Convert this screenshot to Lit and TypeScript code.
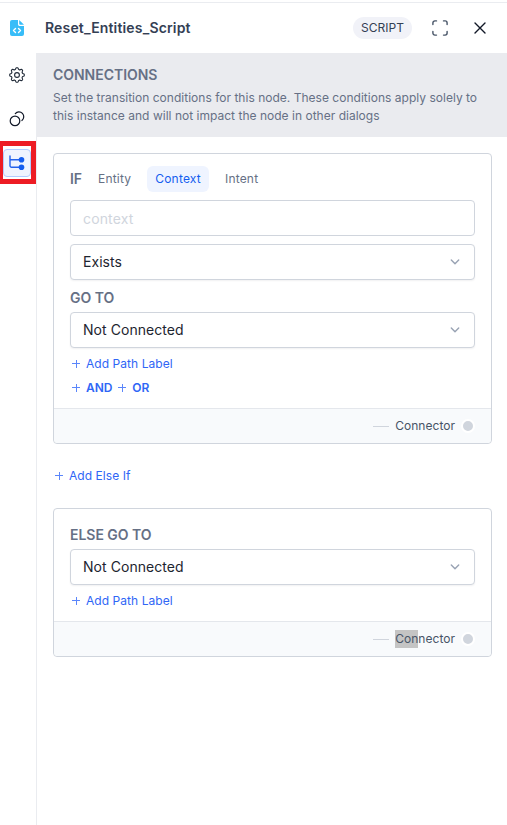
import { LitElement, html, css, nothing } from "lit";
import { customElement, property } from "lit/decorators.js";

const gearPath = (() => {
  const points: string[] = [];
  const steps = 96;
  for (let i = 0; i < steps; i++) {
    const a = (i / steps) * Math.PI * 2;
    const r = 6.5 + 0.85 * Math.tanh(1.8 * Math.cos(a * 8));
    points.push(`${(8 + r * Math.sin(a)).toFixed(2)} ${(8 - r * Math.cos(a)).toFixed(2)}`);
  }
  return `M${points.join("L")}Z`;
})();

const icons = {
  file: html`<svg width="14" height="16" viewBox="0 0 14 16">
    <path fill="#38bdf8" d="M2 0h6v4.200C8 5.300 8.700 6 9.800 6H14v8a2 2 0 0 1-2 2H2a2 2 0 0 1-2-2V2a2 2 0 0 1 2-2Z"/>
    <path fill="#38bdf8" d="M9.200 0 14 4.800H10.200a1 1 0 0 1-1-1Z"/>
    <path fill="none" stroke="#fff" stroke-width="1.400" stroke-linecap="round" stroke-linejoin="round" d="M5.500 8.500 3.500 10.500l2 2M8.500 8.500l2 2-2 2"/>
  </svg>`,
  expand: html`<svg width="16" height="16" viewBox="0 0 16 16" fill="none" stroke="#475467" stroke-width="1.400" stroke-linecap="round" stroke-linejoin="round">
    <path d="M.9 4.500V2.900a2 2 0 0 1 2-2h1.600M11.500.9h1.600a2 2 0 0 1 2 2v1.600M15.100 11.500v1.600a2 2 0 0 1-2 2h-1.600M4.500 15.100H2.900a2 2 0 0 1-2-2v-1.600"/>
  </svg>`,
  close: html`<svg width="12" height="12" viewBox="0 0 12 12" fill="none" stroke="#111827" stroke-width="1.400" stroke-linecap="round">
    <path d="M1 1l10 10M11 1 1 11"/>
  </svg>`,
  gear: html`<svg width="16" height="16" viewBox="0 0 16 16" fill="none" stroke="#1f2937" stroke-width="1.100" stroke-linejoin="round">
    <path d=${gearPath}/><circle cx="8" cy="8" r="2.400"/>
  </svg>`,
  rings: html`<svg width="16" height="16" viewBox="0 0 16 16" fill="none" stroke="#111827" stroke-width="1.200">
    <circle cx="6" cy="9.900" r="4.800"/><path stroke-linecap="round" d="M6.300 2.600a4.800 4.800 0 1 1 6.600 6.900"/>
  </svg>`,
  tree: html`<svg width="16" height="16" viewBox="0 0 16 16">
    <path fill="none" stroke="#2563eb" stroke-width="1.400" stroke-linecap="round" d="M1 1v9.800a1.500 1.500 0 0 0 1.500 1.500H12M1 4.700h11"/>
    <circle cx="12.500" cy="4.700" r="2.800" fill="#155eef"/><circle cx="12.500" cy="12.300" r="2.800" fill="#155eef"/>
  </svg>`,
  chevron: html`<svg width="10" height="6" viewBox="0 0 10 6" fill="none" stroke="#98a2b3" stroke-width="1.400" stroke-linecap="round" stroke-linejoin="round">
    <path d="m1.300 1.100 3.700 3.700 3.700-3.700"/>
  </svg>`,
  plus: html`<svg width="8" height="8" viewBox="0 0 8 8" stroke="#5b86fb" stroke-width="1">
    <path d="M0 3.500h8M4.500 0v8"/>
  </svg>`,
};

@customElement("add-link")
class AddLink extends LitElement {
  @property() label = "";
  @property({ type: Boolean }) strong = false;
  static styles = css`
    :host { display: flex; align-items: center; height: 16px; gap: 6px; color: #2f66f6; font-size: 12px; line-height: 16px; white-space: nowrap; }
    svg { display: block; }
    .label { letter-spacing: 0.06px; }
    .strong { font-weight: 600; letter-spacing: -0.05px; }
  `;
  render() {
    return html`${icons.plus}<span class="label ${this.strong ? "strong" : ""}">${this.label}</span>`;
  }
}

@customElement("select-field")
class SelectField extends LitElement {
  @property() value = "";
  static styles = css`
    :host { display: flex; box-sizing: border-box; height: 36px; padding: 0 14px 0 12px; align-items: center; justify-content: space-between; border: 1px solid #d0d5dd; border-radius: 4px; background: #fff; color: #1d2530; font-size: 14px; letter-spacing: 0.05px; box-shadow: 0 1px 2px rgba(16, 24, 40, 0.06); }
    span { padding-bottom: 2px; }
    svg { display: block; }
  `;
  render() {
    return html`<span>${this.value}</span>${icons.chevron}`;
  }
}

@customElement("connector-bar")
class ConnectorBar extends LitElement {
  @property({ type: Number }) marked = 0;
  static styles = css`
    :host { display: flex; box-sizing: border-box; height: 35px; padding-right: 16px; align-items: center; justify-content: flex-end; border-top: 1px solid #e4e7ec; background: #f8fafc; border-radius: 0 0 4px 4px; color: #475467; font-size: 12px; letter-spacing: 0.03px; }
    .dash { width: 16px; height: 1px; margin-right: 6px; background: #d0d5dd; }
    .text { height: 18px; line-height: 18px; }
    .mark { display: inline-block; height: 18px; background: #c4c4c4; }
    .dot { box-sizing: border-box; width: 14px; height: 14px; margin-left: 6px; border: 2px solid #fff; border-radius: 50%; background: #d0d5dd; }
  `;
  render() {
    const text = "Connector";
    return html`<span class="dash"></span>
      <span class="text">${this.marked ? html`<span class="mark">${text.slice(0, this.marked)}</span>` : nothing}${text.slice(this.marked)}</span>
      <span class="dot"></span>`;
  }
}

@customElement("app-root")
class AppRoot extends LitElement {
  static styles = css`
    :host { display: flex; flex-direction: column; box-sizing: border-box; height: 825px; padding-top: 2px; overflow: hidden; background: #fff; font-family: Inter, "Liberation Sans", sans-serif; color: #667085; }
    svg { display: block; }
    .header { display: flex; box-sizing: border-box; height: 51px; flex: none; align-items: center; padding: 0 21px 0 10px; border-top: 1px solid #eaecf0; }
    .title { flex: 1; margin-left: 21px; padding-bottom: 1px; color: #344054; font-size: 14px; font-weight: 600; letter-spacing: 0.16px; }
    .badge { box-sizing: border-box; width: 59px; height: 22px; border-radius: 11px; background: #f1f2f8; color: #344054; font-size: 12px; line-height: 22px; text-align: center; }
    .expand { margin: 0 26px 0 20px; }
    .body { display: flex; flex: 1; min-height: 0; }
    .rail { display: flex; flex: none; box-sizing: border-box; width: 37px; flex-direction: column; border-right: 1px solid #eaecf0; }
    .tool { display: flex; height: 44px; align-items: center; padding-left: 9px; }
    .frame { display: flex; box-sizing: border-box; width: 36px; height: 43px; padding: 3px 0 2px; border: 5px solid #ed1c24; border-left-width: 3px; background: #fff; }
    .active { display: flex; flex: 1; align-items: center; justify-content: center; border: 1px solid #b2ccff; border-radius: 4px; background: #eff4ff; }
    .main { flex: 1; min-width: 0; }
    .banner { box-sizing: border-box; height: 84px; padding: 13px 16px 0; background: #eaebef; }
    .heading { font-size: 14px; font-weight: 600; line-height: 17px; letter-spacing: -0.03px; }
    .description { margin-top: 6px; font-size: 12px; line-height: 18px; letter-spacing: 0.018px; white-space: nowrap; }
    .content { padding: 16px 15px 0 16px; }
    .card { border: 1px solid #d0d5dd; border-radius: 4px; }
    .fields { display: flex; flex-direction: column; padding: 12px 16px 12px; }
    .fields.short { padding-top: 16px; }
    .tabs { display: flex; height: 26px; align-items: center; font-size: 12px; letter-spacing: 0.2px; }
    .tabs .heading { width: 12px; margin-right: 8px; padding-bottom: 1px; }
    .tab { height: 26px; padding: 0 8px; border-radius: 6px; line-height: 26px; margin-right: 8px; }
    .tab.on { background: #eff4ff; color: #155eef; }
    .input { box-sizing: border-box; height: 36px; margin: 8px 0; padding: 0 12px; border: 1px solid #d0d5dd; border-radius: 4px; color: #d0d5dd; font-size: 14px; line-height: 35px; letter-spacing: 0.15px; }
    .goto { margin: 9px 0 6px; }
    .short .goto { margin: 1px 0 6px; }
    .path { margin: 8px 0 0 2px; }
    .logic { display: flex; gap: 6px; margin: 8px 0 0 2px; }
    .elseif { margin: 24px 0 24px 2px; }
  `;
  render() {
    return html`
      <div class="header">
        ${icons.file}
        <span class="title">Reset_Entities_Script</span>
        <span class="badge">SCRIPT</span>
        <span class="expand">${icons.expand}</span>
        ${icons.close}
      </div>
      <div class="body">
        <nav class="rail">
          <span class="tool">${icons.gear}</span>
          <span class="tool">${icons.rings}</span>
          <span class="frame"><span class="active">${icons.tree}</span></span>
        </nav>
        <main class="main">
          <section class="banner">
            <div class="heading">CONNECTIONS</div>
            <div class="description">Set the transition conditions for this node. These conditions apply solely to<br />this instance and will not impact the node in other dialogs</div>
          </section>
          <div class="content">
            <section class="card">
              <div class="fields">
                <div class="tabs">
                  <span class="heading">IF</span>
                  <span class="tab">Entity</span>
                  <span class="tab on">Context</span>
                  <span class="tab">Intent</span>
                </div>
                <div class="input">context</div>
                <select-field value="Exists"></select-field>
                <div class="heading goto">GO TO</div>
                <select-field value="Not Connected"></select-field>
                <add-link class="path" label="Add Path Label"></add-link>
                <div class="logic">
                  <add-link strong label="AND"></add-link>
                  <add-link strong label="OR"></add-link>
                </div>
              </div>
              <connector-bar></connector-bar>
            </section>
            <add-link class="elseif" label="Add Else If"></add-link>
            <section class="card">
              <div class="fields short">
                <div class="heading goto">ELSE GO TO</div>
                <select-field value="Not Connected"></select-field>
                <add-link class="path" label="Add Path Label"></add-link>
              </div>
              <connector-bar marked="3"></connector-bar>
            </section>
          </div>
        </main>
      </div>
    `;
  }
}
